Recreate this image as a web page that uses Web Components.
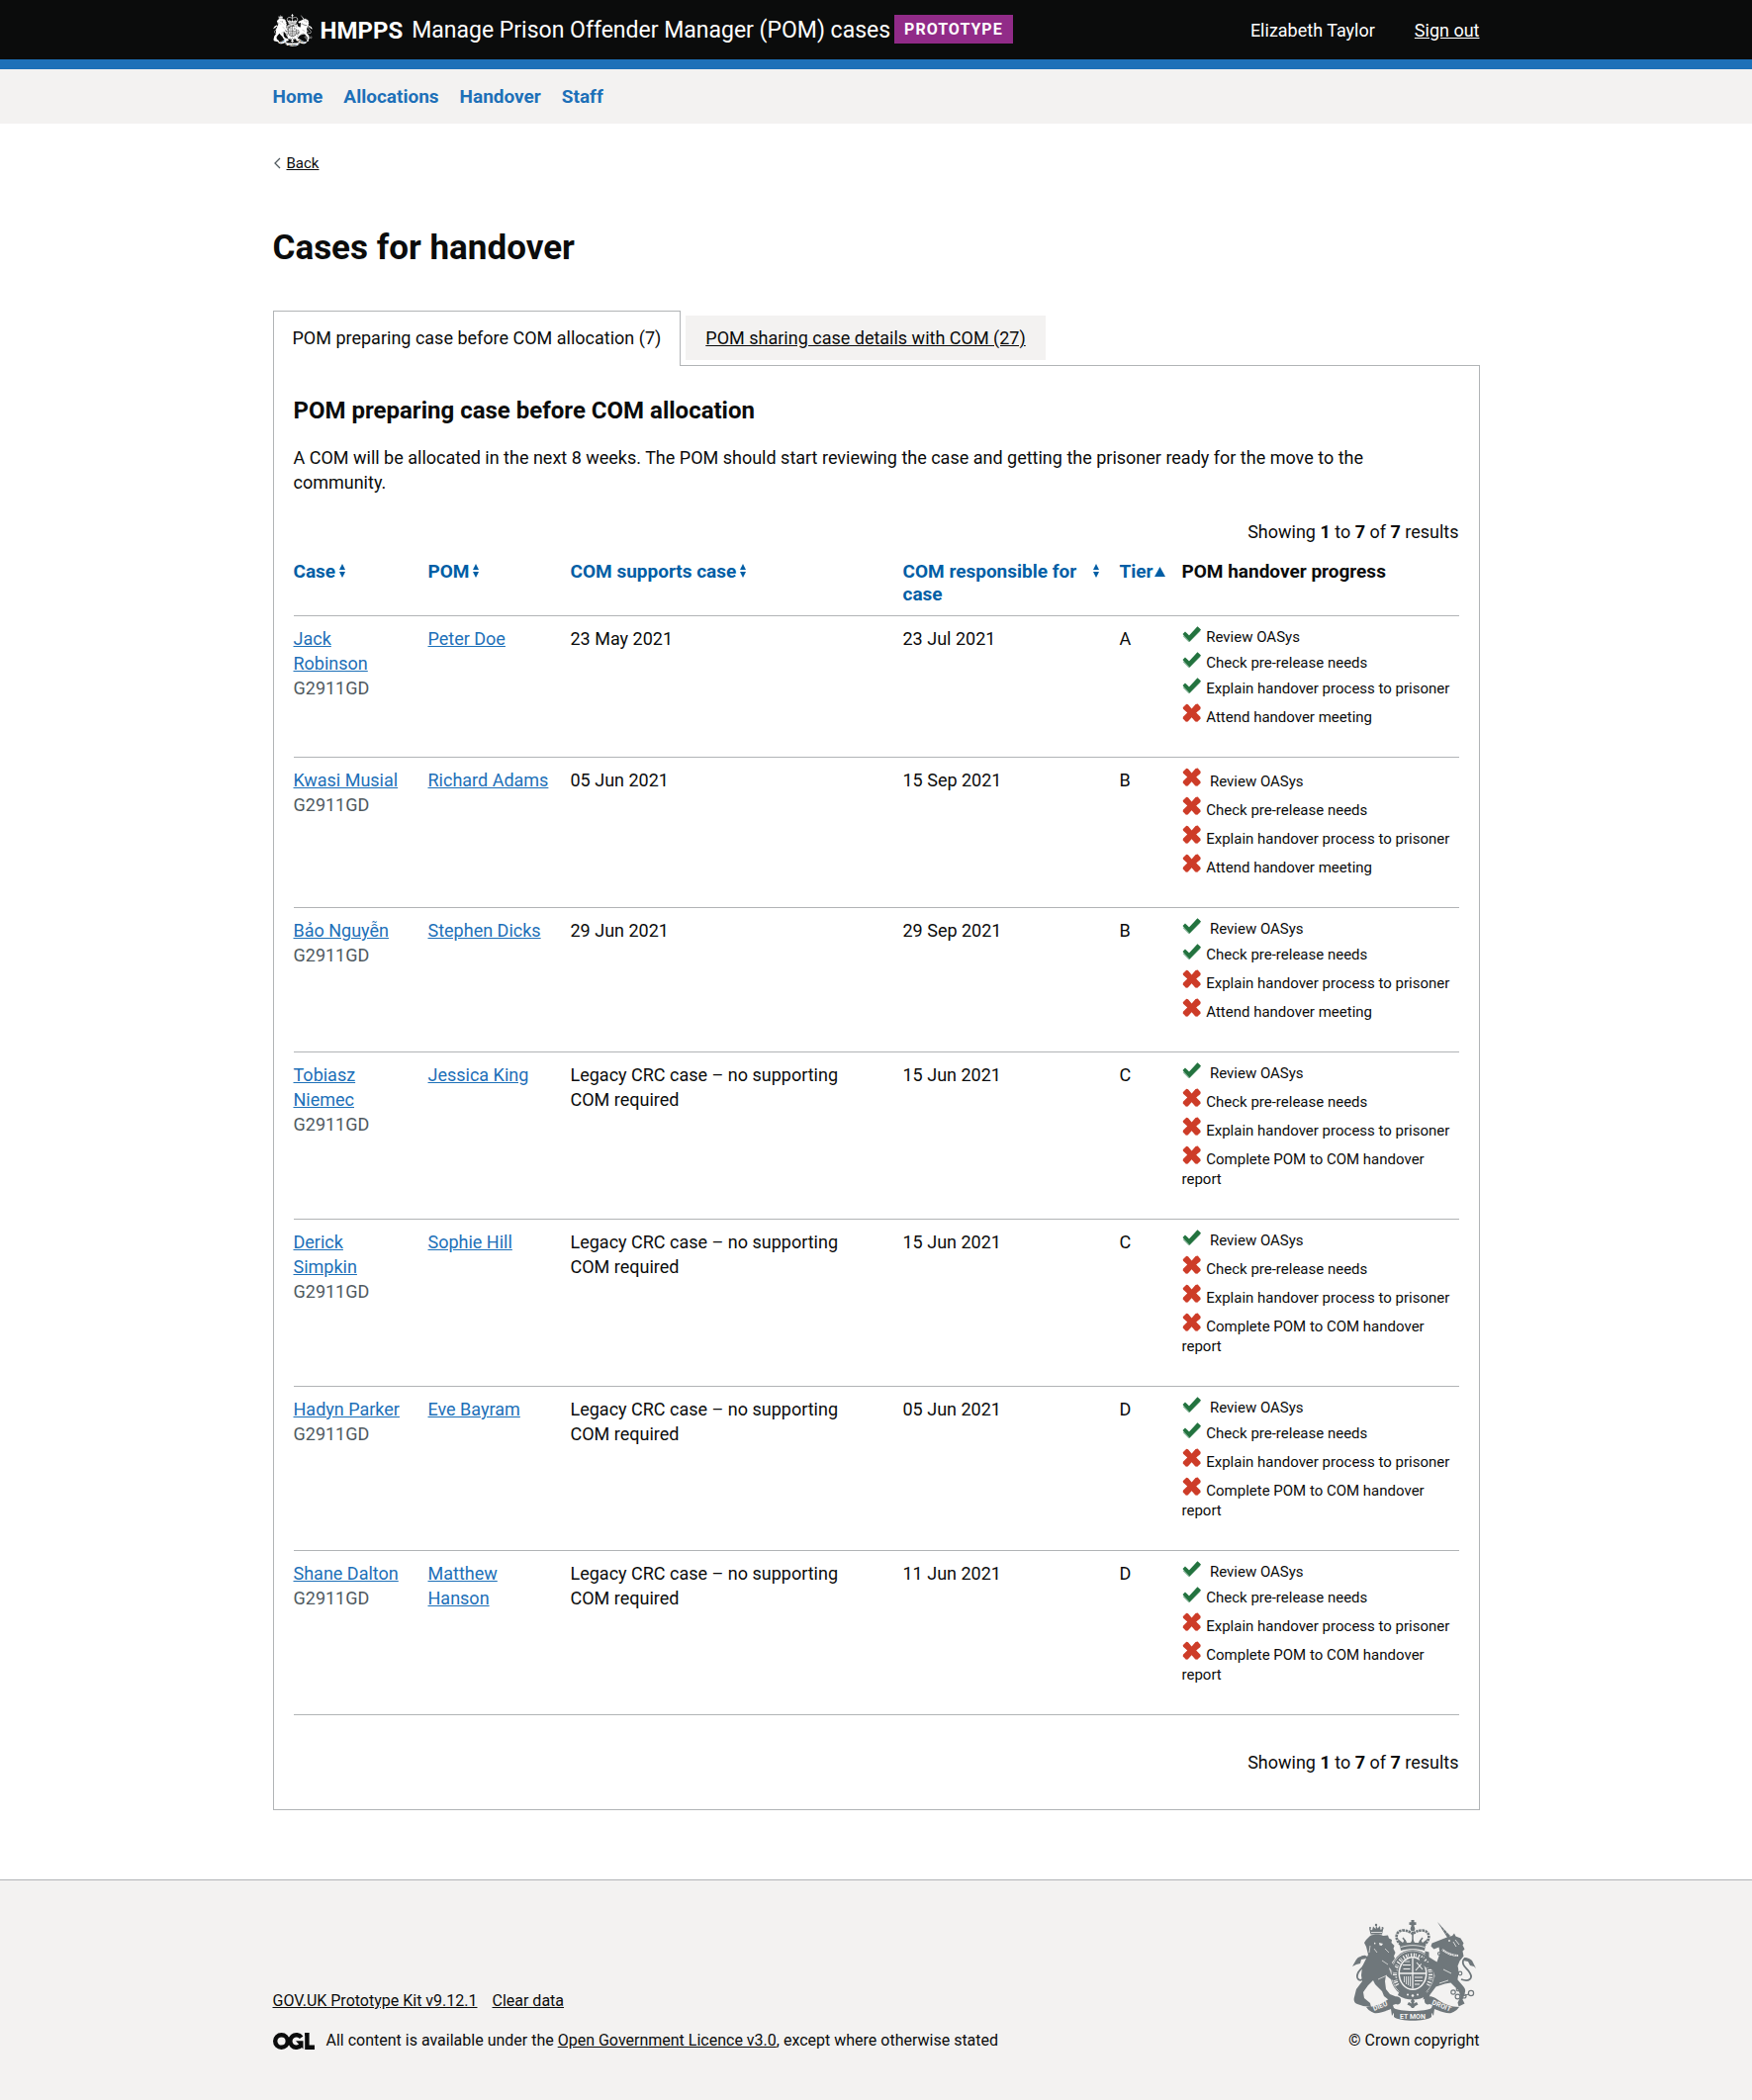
<!DOCTYPE html>
<html lang="en">
<head>
<meta charset="utf-8">
<meta name="viewport" content="width=device-width, initial-scale=1">
<title>Cases for handover</title>
<style>
  html { background: #f3f2f1; }
  body {
    margin: 0;
    background: #fff;
    color: #0b0c0c;
    font-family: Roboto, "Liberation Sans", sans-serif;
    font-size: 18px;
    line-height: 25px;
    --text-s: 15px;
    --line-s: 20px;
    --page-width: 1220px;
    --link: #1d70b8;
    --rule: #b1b4b6;
    --shade: #f3f2f1;
  }
</style>
</head>
<body>
<pom-app></pom-app>

<template id="pom-app">
  <style>
    :host { display: block; }
    main { display: block; max-width: var(--page-width); margin: 0 auto; padding: 30px 15px 70px; }
    h1 { margin: 56px 0 49px; font-size: 35px; line-height: 39px; font-weight: 700; }
    h2 { margin: 0 0 20px; font-size: 24px; line-height: 30px; font-weight: 700; }
    p { margin: 0 0 25px; }
    @media (min-width: 1250px) { main { padding-left: 0; padding-right: 0; } }
  </style>
  <hmpps-header></hmpps-header>
  <primary-nav></primary-nav>
  <main>
    <back-link></back-link>
    <h1>Cases for handover</h1>
    <tab-panel>
      <h2>POM preparing case before COM allocation</h2>
      <p>A COM will be allocated in the next 8 weeks. The POM should start reviewing the case and getting the prisoner ready for the move to the community.</p>
      <result-count></result-count>
      <case-table></case-table>
      <result-count class="end"></result-count>
    </tab-panel>
  </main>
  <page-footer></page-footer>
</template>

<template id="royal-arms">
  <style>
    :host { display: block; }
    svg { display: block; width: 100%; height: 100%; }
    .g { stroke: var(--ground); fill: none; }
    .gf { fill: var(--ground); }
    .l { fill: none; stroke: currentColor; }
    text { font: 700 7px Roboto, sans-serif; fill: var(--ground); }
  </style>
  <svg viewBox="0 0 125 102" fill="currentColor" aria-hidden="true">
    <!-- crown -->
    <path d="M59.500 0h3v2.300h2v2.600h-2v2.400h-3V4.900h-2V2.300h2z"/>
    <circle cx="61" cy="9" r="2.400"/>
    <path class="l" stroke-width="2.600" stroke-dasharray="2.400 .7" d="M49 25C42 19 44 11 51 10.500c5 0 8 2 10 3.500 2-1.500 5-3.500 10-3.500 7 .5 9 8.500 2 14.500"/>
    <path class="l" stroke-width="1.500" d="M61 12v13M54 22l-3-4M68 22l3-4"/>
    <path d="M48 25l-2-6 5 4 2-3 3 4 3-1 2-4 2 4 3 1 3-4 2 3 5-4-2 6z"/>
    <path d="M48 25c8-3 18-3 26 0l-1 6c-7-2.500-17-2.500-24 0z"/>
    <path class="g" stroke-width=".8" d="M49 27.500c8-2.500 16-2.500 24 0"/>
    <!-- garter and shield -->
    <ellipse cx="61" cy="54.500" rx="22.500" ry="24.500"/>
    <ellipse class="g" cx="61" cy="54.500" rx="21.500" ry="23.500" stroke-width=".6"/>
    <ellipse class="gf" cx="61" cy="54" rx="14.500" ry="17"/>
    <ellipse cx="61" cy="54" rx="13" ry="15.500"/>
    <path class="g" stroke-width="1.300" d="M61 38.500v31M48 54h26"/>
    <path class="g" stroke-width="1.100" d="M51 45.500h8M51.500 49.500h7M65 43l6 7M71 43l-7 8M63 58h8M63 61.500h8M63 65h5"/>
    <path class="g" stroke-width=".8" d="M52.500 57v6M54.500 57v8M56.500 57v9M58.500 57v10M53 42h5"/>
    <path class="g" stroke-width="4" stroke-dasharray="1.300 1.500 1.300 .9 .7 2" d="M45.500 66A18 20.200 0 1 1 76.500 66"/>
    <path d="M48 71c8 6 18 6 26 0l2 5c-9 6-21 6-30 0z"/>
    <circle class="gf" cx="56" cy="75.500" r="1"/><circle class="gf" cx="61" cy="76.500" r="1.300"/><circle class="gf" cx="66" cy="75.500" r="1"/>
    <!-- lion -->
    <path d="M18.500 14.500L17 8.500l3 2 1-4 2.500 2.500L24 5l1.500 3.500L28 6l.5 4 3-2-1.500 6.500z"/>
    <path class="g" stroke-width=".8" d="M19 12.500h11"/>
    <circle cx="24" cy="5" r="1.200"/><circle cx="18" cy="8" r="1"/><circle cx="30.500" cy="8" r="1"/>
    <path d="M18 16c4-2 10-2 13 0l5-.5 1 3 3 1.500-.5 3 3 3-1 3 2 4-1.500 3.500L43 39l-3 4 5 7c-1 3-3 3-4 2l-4-4 2 7 5 3c-1 3-4 3-5 2l-5-4-1 6 1 8 4 5 5 2 1 4h-7l-5-4-2-5-7-7-2-4-5 5-5 7 1 6 6 5 1 4-8-1-6-2c-3-1-4-4-3-7l2-8 6-8-1-6 1-9 6-12-1-4-1-4-2-4 2-3z"/>
    <path class="gf" d="M27 23l4 1-1.500 2-2-.5zM22 22.500l2 1.500-2 .5z"/>
    <path class="g" stroke-width=".7" d="M18 26l-1 7M22 29l3 4M33 29l4 4M36 45l-6-4M26 60l9-4"/>
    <path class="l" stroke-width="1.800" d="M13 58c-6 6-10 1-7-5 3-5 10-8 9-14-.5-3-4-3-6-1"/>
    <path d="M0 47l4-7c2-3 6-4 9-4l1 3-5 1-1 4-4 1z"/>
    <!-- unicorn -->
    <path d="M86 2l13 14-2.500 2.500z"/>
    <path class="g" stroke-width=".6" d="M89.500 7.500l1.500-1.500M92 10.500l1.600-1.500M94.500 13.500l1.800-1.500"/>
    <path d="M97 17l4-1 2-2.500 1.500 3 5 2 3 5-1 2 2 4-2 2 1 5-4 5-2 5c2 7 0 11 0 14l6 7c2 2 2 5 1 7l-2 6 2 4-6 3-1-4 3-6-2-6-8-8-6 1-9 3-6 8-1 3-6 2 1-5 4-3 5-9 2-7-2-6-8-3-5-4-1-5 4-1 1 4 6 2-5-7v-5l4 1v5l8 5 3-9-1-6-5 2-3-3 1-3z"/>
    <path class="g" stroke-width="1.800" d="M91 30c5 4 11 6 16 6"/>
    <path class="l" stroke-width=".8" stroke-dasharray="1.500 1" d="M91 30c5 4 11 6 16 6"/>
    <circle class="gf" cx="98" cy="21" r=".9"/>
    <path class="g" stroke-width=".8" d="M102 22l3 5M104 20l4 5M92 50l8 4M97 61l-9 3"/>
    <path class="l" stroke-width="1.800" d="M110 60c8 3 12-1 9-6-2-5-9-7-7-13 1-3 4-2 6 0"/>
    <path d="M125 49l-4-8c-2-2-5-3-8-3l-1 3 5 1 2 4 4 1z"/>
    <g class="l" stroke-width="1.200"><circle cx="102" cy="73" r="2.200"/><circle cx="106.500" cy="77.500" r="2.400"/><circle cx="113" cy="77" r="2"/><circle cx="120" cy="74" r="2.600"/><circle cx="107" cy="70" r="1.800"/><circle cx="109" cy="54" r="1.800"/><circle cx="88" cy="34" r="1.500"/><path d="M108.500 78l9-3"/></g>
    <!-- scroll -->
    <path d="M14 88c8 0 16-3 24-9 5-3 12-2 11 3 0 3-3 4-5 3l-3 1 2 6-3 5-1-7c-5 2-13 5-17 4-3-1-6-3-8-6z"/>
    <path d="M108 88c-8 0-16-3-24-9-5-3-12-2-11 3 0 3 3 4 5 3l3 1-2 6 3 5 1-7c5 2 13 5 17 4 3-1 6-3 8-6z"/>
    <path d="M42 89c5 4 33 4 38 0v9c-6 5-32 5-38 0z"/>
    <text transform="translate(22 92) rotate(-22)">DIEU</text>
    <text x="61" y="99.500" text-anchor="middle">ET MON</text>
    <text transform="translate(80 85) rotate(22)">DROIT</text>
    <path d="M61 79l2 3-1 2.500 3-1.500 1.500 2.500-3 1.500-1.500 2h-2l-1.500-2-3-1.500 1.500-2.500 3 1.500-1-2.500z"/>
  </svg>
</template>

<template id="hmpps-header">
  <style>
    :host { display: block; background: #0b0c0c; color: #fff; border-bottom: 10px solid var(--link); }
    .bar { display: flex; align-items: center; min-height: 60px; max-width: var(--page-width); margin: 0 auto; }
    royal-arms { width: 40px; height: 33px; --ground: #0b0c0c; }
    a { color: inherit; }
    .brand { display: flex; align-items: center; gap: 8px; font-weight: 700; font-size: 24px; line-height: 28px; text-decoration: none; }
    .brand span, .service { padding-top: 2px; }
    .service { margin-left: 9px; font-size: 23px; line-height: 28px; text-decoration: none; }
    .tag { margin-left: 4px; margin-bottom: 2px; padding: 5px 10px 4px; background: #912b88; font-size: 16px; line-height: 20px; font-weight: 700; letter-spacing: 1px; }
    .user { display: flex; gap: 40px; margin-left: auto; }
  </style>
  <header class="bar">
    <a class="brand" href="#"><royal-arms></royal-arms><span>HMPPS</span></a>
    <a class="service" href="#">Manage Prison Offender Manager (POM) cases</a>
    <strong class="tag">PROTOTYPE</strong>
    <div class="user"><span>Elizabeth Taylor</span><a href="#">Sign out</a></div>
  </header>
</template>

<template id="primary-nav">
  <style>
    :host { display: block; background: var(--shade); }
    ul { display: flex; gap: 21px; max-width: var(--page-width); margin: 0 auto; padding: 15px 0; list-style: none; }
    a { color: var(--link); font-size: 19px; font-weight: 700; text-decoration: none; }
  </style>
  <nav aria-label="Primary">
    <ul>
      <li><a href="#">Home</a></li>
      <li><a href="#">Allocations</a></li>
      <li><a href="#">Handover</a></li>
      <li><a href="#">Staff</a></li>
    </ul>
  </nav>
</template>

<template id="back-link">
  <style>
    :host { display: flex; align-items: center; gap: 6px; font-size: var(--text-s); line-height: var(--line-s); }
    svg { display: block; width: 8px; height: 12px; }
    a { color: inherit; }
  </style>
  <svg viewBox="0 0 8 12" fill="none" stroke="#505a5f" stroke-width="1.300" aria-hidden="true"><path d="M7 1L2 6l5 5"/></svg>
  <a href="#">Back</a>
</template>

<template id="tab-panel">
  <style>
    :host { display: block; }
    ul { display: flex; margin: 0; padding: 0; list-style: none; }
    li { margin: 0 5px 5px 0; padding: 10px 20px; background: var(--shade); }
    li.on { position: relative; margin: -5px 5px -1px 0; padding: 14px 19px 16px; background: #fff; border: 1px solid var(--rule); border-bottom: 0; }
    a { color: inherit; }
    .on a { text-decoration: none; }
    section { padding: 30px 20px 35px 20px; border: 1px solid var(--rule); }
  </style>
  <ul>
    <li class="on"><a href="#preparing" aria-current="true">POM preparing case before COM allocation (7)</a></li>
    <li><a href="#sharing">POM sharing case details with COM (27)</a></li>
  </ul>
  <section id="preparing"><slot></slot></section>
</template>

<template id="result-count">
  <style>
    :host { display: block; margin-bottom: 6px; text-align: right; }
    :host(.end) { margin: 35px 0 0; }
  </style>
  Showing <b>1</b> to <b>7</b> of <b>7</b> results
</template>

<template id="sort-button">
  <style>
    :host { display: block; }
    button { display: flex; align-items: flex-start; gap: 3px; margin: 0; padding: 0; border: 0; background: none; color: #005ea5; font: inherit; text-align: left; cursor: pointer; }
    svg { flex: none; display: block; width: 8px; height: 23px; }
    .up { display: none; width: 11px; }
    :host([sorted]) .both { display: none; }
    :host([sorted]) .up { display: block; }
    :host([sorted]) button { gap: 1px; }
  </style>
  <button type="button"><span><slot></slot></span>
    <svg class="both" viewBox="0 0 8 23" fill="currentColor" aria-hidden="true"><path d="M4 4l3 6H1zM4 18l3-6H1z"/></svg>
    <svg class="up" viewBox="0 0 11 23" fill="currentColor" aria-hidden="true"><path d="M5.500 7L11 17H0z"/></svg>
  </button>
</template>

<template id="progress-list">
  <style>
    :host { display: block; font-size: var(--text-s); line-height: var(--line-s); }
    ul { margin: 0; padding: 0 0 15px; list-style: none; }
    li { margin-bottom: 5px; }
    svg { display: inline-block; width: 20px; vertical-align: baseline; margin-right: 1px; }
    .yes { height: 16px; }
    .no { height: 19px; }
  </style>
  <ul></ul>
</template>

<template id="tick">
  <svg class="yes" viewBox="0 0 20 16" role="img" aria-label="Done"><path d="M2.500 8.500L7 13 17 3" fill="none" stroke="#8db79e" stroke-width="5"/><path d="M.5 8L3 5.500l4 4L15.500.3 19 3.500 7.500 15.500z" fill="#23733f"/></svg>
</template>
<template id="cross">
  <svg class="no" viewBox="0 0 20 19" role="img" aria-label="Not done"><path d="M.7 4.200L4.300.7l1.700.5 3.600 4.300L13.500 1l2.200-.4 3 3.300-.3 2-4.200 3.700 4.200 4.200.3 1.700-3.400 3.300-2-.4-3.700-4.200-3.900 4.200-1.800.3-3.200-3.200.2-1.800 4.300-4.100L1 5.800z" fill="#cd3c28"/></svg>
</template>

<template id="case-table">
  <style>
    :host { display: block; }
    table { width: 100%; table-layout: fixed; border-collapse: separate; border-spacing: 0; }
    .case { width: 136px; } .pom { width: 144px; } .resp { width: 219px; } .tier { width: 63px; } .prog { width: 280px; }
    th, td { padding: 10px 20px 10px 0; border-bottom: 1px solid var(--rule); text-align: left; vertical-align: top; font-weight: 400; }
    thead th { font-size: 19px; line-height: 23px; font-weight: 700; }
    th:nth-child(5), td:nth-child(5) { padding-right: 8px; }
    th:last-child, td:last-child { padding-right: 0; }
    a { color: var(--link); }
    .id { display: block; color: #505a5f; }
    .note { display: block; max-width: 280px; }
  </style>
  <table>
    <colgroup><col class="case"><col class="pom"><col><col class="resp"><col class="tier"><col class="prog"></colgroup>
    <thead>
      <tr>
        <th scope="col"><sort-button>Case</sort-button></th>
        <th scope="col"><sort-button>POM</sort-button></th>
        <th scope="col"><sort-button>COM supports case</sort-button></th>
        <th scope="col"><sort-button>COM responsible for case</sort-button></th>
        <th scope="col" aria-sort="ascending"><sort-button sorted>Tier</sort-button></th>
        <th scope="col">POM handover progress</th>
      </tr>
    </thead>
    <tbody></tbody>
  </table>
</template>

<template id="page-footer">
  <style>
    :host { display: block; background: var(--shade); border-top: 1px solid var(--rule); font-size: 16px; line-height: var(--line-s); }
    footer { display: flex; align-items: flex-end; justify-content: space-between; max-width: var(--page-width); margin: 0 auto; padding: 40px 0 50px; }
    a { color: inherit; }
    ul { display: flex; gap: 15px; margin: 0 0 20px; padding: 0; list-style: none; }
    .licence { display: flex; align-items: center; gap: 12px; }
    .licence svg { width: 42px; height: 17px; }
    .crown { display: flex; flex-direction: column; align-items: center; gap: 10px; color: #6f777b; }
    .crown a { color: #0b0c0c; text-decoration: none; }
    royal-arms { width: 125px; height: 102px; --ground: #f3f2f1; }
  </style>
  <footer>
    <div>
      <ul><li><a href="#">GOV.UK Prototype Kit v9.12.1</a></li><li><a href="#">Clear data</a></li></ul>
      <div class="licence">
        <svg viewBox="0 0 42 17" fill="none" stroke="#0b0c0c" stroke-width="4.400" role="img" aria-label="Open Government Licence logo"><circle cx="8.500" cy="8.500" r="6.300"/><path d="M28.700 4.800A6.300 6.300 0 1 0 28.500 12.500"/><path d="M23 8.300h7.500V16.500L23 8.300z" fill="#0b0c0c" stroke="none"/><path d="M34.400 0v14.800H42"/><path d="M32.200 3L36.600 0H32z" fill="#0b0c0c" stroke="none"/></svg>
        <span>All content is available under the <a href="#">Open Government Licence v3.0</a>, except where otherwise stated</span>
      </div>
    </div>
    <div class="crown"><royal-arms></royal-arms><a href="#">© Crown copyright</a></div>
  </footer>
</template>

<script>
  const copy = id => document.getElementById(id).content.cloneNode(true);

  class TemplateElement extends HTMLElement {
    constructor() {
      super();
      this.attachShadow({ mode: 'open' }).append(copy(this.localName));
    }
  }

  // steps: one letter per step, y = done, n = not done
  const MEETING = 'Attend handover meeting';
  const REPORT = 'Complete POM to COM handover report';
  const LEGACY = 'Legacy CRC case – no supporting COM required';
  const cases = [
    ['Jack Robinson', 'Peter Doe', '23 May 2021', '23 Jul 2021', 'A', 'yyyn', MEETING, ''],
    ['Kwasi Musial', 'Richard Adams', '05 Jun 2021', '15 Sep 2021', 'B', 'nnnn', MEETING, '\u00a0'],
    ['Bảo Nguyễn', 'Stephen Dicks', '29 Jun 2021', '29 Sep 2021', 'B', 'yynn', MEETING, '\u00a0'],
    ['Tobiasz Niemec', 'Jessica King', LEGACY, '15 Jun 2021', 'C', 'ynnn', REPORT, '\u00a0'],
    ['Derick Simpkin', 'Sophie Hill', LEGACY, '15 Jun 2021', 'C', 'ynnn', REPORT, '\u00a0'],
    ['Hadyn Parker', 'Eve Bayram', LEGACY, '05 Jun 2021', 'D', 'yynn', REPORT, '\u00a0'],
    ['Shane Dalton', 'Matthew Hanson', LEGACY, '11 Jun 2021', 'D', 'yynn', REPORT, '\u00a0']
  ];

  class ProgressList extends TemplateElement {
    set data({ steps, last, lead }) {
      const list = this.shadowRoot.querySelector('ul');
      [lead + 'Review OASys', 'Check pre-release needs', 'Explain handover process to prisoner', last].forEach((label, i) => {
        const item = document.createElement('li');
        item.append(copy(steps[i] === 'y' ? 'tick' : 'cross'), label);
        list.append(item);
      });
    }
  }

  class CaseTable extends TemplateElement {
    connectedCallback() {
      const body = this.shadowRoot.querySelector('tbody');
      for (const [name, pom, supports, responsible, tier, steps, last, lead] of cases) {
        const row = body.insertRow();
        row.innerHTML = `<td><a href="#">${name}</a><span class="id">G2911GD</span></td>
          <td><a href="#">${pom}</a></td><td><span class="note">${supports}</span></td>
          <td>${responsible}</td><td>${tier}</td><td></td>`;
        const list = document.createElement('progress-list');
        list.data = { steps, last, lead };
        row.lastElementChild.append(list);
      }
    }
  }

  customElements.define('progress-list', ProgressList);
  customElements.define('case-table', CaseTable);
  for (const name of ['royal-arms', 'sort-button', 'result-count', 'back-link', 'tab-panel', 'hmpps-header', 'primary-nav', 'page-footer', 'pom-app']) {
    customElements.define(name, class extends TemplateElement {});
  }
</script>
</body>
</html>
